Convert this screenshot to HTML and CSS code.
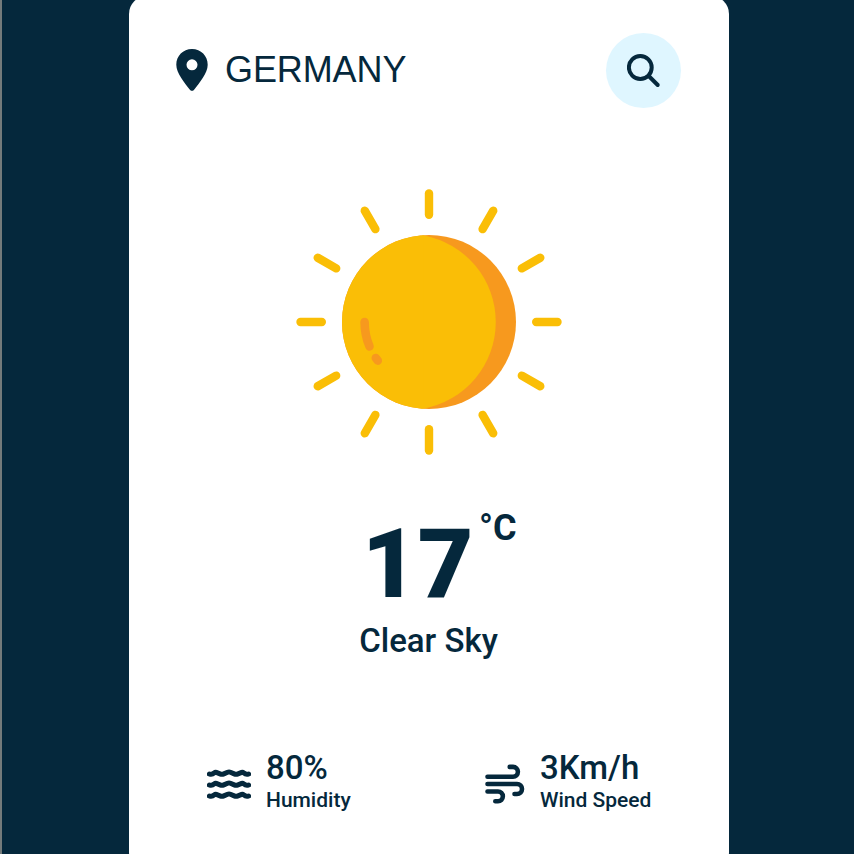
FILE: index.html
```html
<!DOCTYPE html>
<html lang="en">
<head>
<meta charset="utf-8">
<title>Weather</title>
<link rel="stylesheet" href="styles.css">
</head>
<body>
<main class="card">
  <header class="search">
    <svg class="pin" viewBox="0 0 32 42"><path fill-rule="evenodd" d="M16 0C7 0 0.3 6.9 0.3 15.8C0.3 24 8.5 34 14.1 40.9Q16 42.8 17.9 40.9C23.5 34 31.7 24 31.7 15.8C31.7 6.9 25 0 16 0ZM16 10.3A5.5 5.5 0 1 1 16 21.3A5.5 5.5 0 1 1 16 10.3Z"/></svg>
    <span class="place">GERMANY</span>
    <button class="find" aria-label="Search">
      <svg class="lens" viewBox="0 0 34 34"><circle cx="13.3" cy="13.5" r="11.4"/><path d="M21.7 22L30.7 31"/></svg>
    </button>
  </header>
  <svg class="sun" viewBox="-140 -140 280 280">
    <circle r="87" fill="#f7991e"/>
    <path fill="#fabe06" d="M0-87A87 87 0 1 0 0 87Q-3 87-7 86.7A88.5 88.5 0 0 0-7-86.7Q-3-87 0-87Z"/>
    <path fill="#fabe06" d="M-8-86.6A88 88 0 0 1-8 86.6Z" transform="translate(2.4 0)"/>
    <g class="rays">
      <path id="ray" d="M0-128.5V-107.2"/>
      <use href="#ray" transform="rotate(30)"/><use href="#ray" transform="rotate(60)"/>
      <use href="#ray" transform="rotate(90)"/><use href="#ray" transform="rotate(120)"/>
      <use href="#ray" transform="rotate(150)"/><use href="#ray" transform="rotate(180)"/>
      <use href="#ray" transform="rotate(210)"/><use href="#ray" transform="rotate(240)"/>
      <use href="#ray" transform="rotate(270)"/><use href="#ray" transform="rotate(300)"/>
      <use href="#ray" transform="rotate(330)"/>
    </g>
    <path class="gleam" d="M-64.4 0Q-64.4 13-59.5 24.4M-53.2 36L-51.2 38.6"/>
  </svg>
  <div class="temperature">17<span class="unit">°C</span></div>
  <div class="description">Clear Sky</div>
  <section class="details">
    <div class="detail">
      <svg class="waves" viewBox="0 0 44 30">
        <path id="wave" d="M2.4 5Q5 6 7.2 3.9Q8.3 3 9.3 3.4L13.6 5.1Q15 5.7 16.8 4.9L20.6 3.2Q22 2.6 23.4 3.2L27.2 4.9Q29 5.7 30.4 5.1L34.7 3.4Q35.7 3 36.8 3.9Q39 6 41.6 5"/>
        <use href="#wave" y="11"/><use href="#wave" y="22"/>
      </svg>
      <div class="info"><span class="value">80%</span><span class="label">Humidity</span></div>
    </div>
    <div class="detail wind">
      <svg class="gusts" viewBox="0 0 40 40"><path d="M2.5 12.7H28A4.9 4.9 0 0 0 28 2.9H24.7M2.5 20H32A5 5 0 0 1 32 30H29.5M2.5 27.5H13A4.8 4.8 0 0 1 13 37.2H10.3"/></svg>
      <div class="info"><span class="value">3Km/h</span><span class="label">Wind Speed</span></div>
    </div>
  </section>
</main>
</body>
</html>
```
FILE: styles.css
```css
* { box-sizing: border-box; }
body {
  margin: 0;
  height: 854px;
  overflow: hidden;
  background: #05283c;
  border-left: 2px solid #747b7b;
  color: #05283c;
  font-family: Roboto, sans-serif;
}
.card {
  width: 600px;
  height: 874px;
  margin: -4px 0 0 127px;
  padding: 37px 48px 0 47px;
  border-radius: 18px;
  background: #fff;
}
.search { display: flex; align-items: center; height: 75px; }
.pin { width: 32px; height: 42px; margin: 0 0.5px 1px 0; fill: #05283c; }
.place {
  margin: 0 0 2px 16.5px;
  font: 36px/42px "Liberation Sans", Arial, sans-serif;
  letter-spacing: -0.1px;
}
.find {
  display: grid;
  place-items: center;
  width: 75px;
  height: 75px;
  margin-left: auto;
  padding: 0;
  border: 0;
  border-radius: 50%;
  background: #dff6ff;
}
.lens {
  width: 34px;
  height: 34px;
  fill: none;
  stroke: #05283c;
  stroke-width: 4;
  stroke-linecap: round;
}
.sun { display: block; width: 280px; height: 280px; margin: 74px auto 0 113px; }
.rays { stroke: #fabe06; stroke-width: 8.4; stroke-linecap: round; }
.gleam { fill: none; stroke: #f7991e; stroke-width: 8.6; stroke-linecap: round; }
.temperature {
  position: relative;
  width: max-content;
  margin: 46px auto 0 186px;
  font-size: 96px;
  font-weight: 900;
  line-height: 112px;
}
.unit {
  position: absolute;
  left: 117px;
  top: -1px;
  font-size: 36px;
  font-weight: 700;
  line-height: 42px;
}
.description {
  margin-top: 1px;
  text-align: center;
  font-size: 33px;
  font-weight: 500;
  line-height: 39px;
}
.details { display: flex; margin-top: 88px; padding-left: 31px; }
.detail { display: flex; width: 278px; }
.wind { width: 180px; }
.waves {
  width: 44px;
  height: 30px;
  margin: 21px 15px 0 0;
  fill: none;
  stroke: #05283c;
  stroke-width: 5;
  stroke-linecap: round;
}
.gusts {
  flex: none;
  width: 40px;
  height: 40px;
  margin: 16px 15px 0 0;
  fill: none;
  stroke: #05283c;
  stroke-width: 4.6;
  stroke-linecap: round;
}
.info { display: flex; flex-direction: column; font-weight: 500; white-space: nowrap; }
.value { font-size: 33px; line-height: 39px; }
.label { margin-top: 1px; font-size: 21px; line-height: 25px; }
```
